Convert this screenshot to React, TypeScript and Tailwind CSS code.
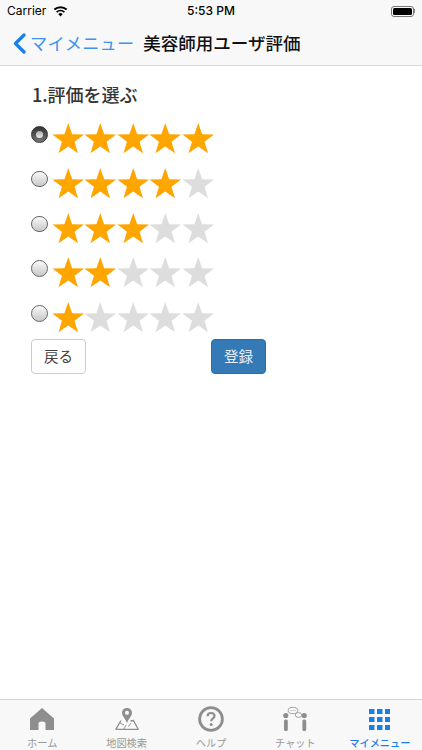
import { Fragment } from 'react';

const jp = "font-['Noto_Sans_CJK_JP','Noto_Sans',sans-serif]";

function Star({ on }: { on: boolean }) {
  return (
    <svg viewBox="0 0 32 31" className="size-[32.5px] shrink-0">
      <path
        d="M16 0.5 L19.8 11.6 L31.6 11.8 L22.2 18.9 L25.6 30.2 L16 23.5 L6.4 30.2 L9.8 18.9 L0.4 11.8 L12.2 11.6 Z"
        fill={on ? '#ffa500' : '#dddddd'}
      />
    </svg>
  );
}

function Radio({ checked }: { checked: boolean }) {
  if (checked) {
    return (
      <div className="flex size-[16.5px] items-center justify-center rounded-full border border-[#333] bg-gradient-to-b from-[#333] to-[#777]">
        <div className="size-[7px] rounded-full bg-gradient-to-b from-[#aaa] to-[#f0f0f0]" />
      </div>
    );
  }
  return <div className="size-[16.5px] rounded-full border border-[#666] bg-gradient-to-b from-[#fafafa] to-[#c8c8c8]" />;
}

function RatingRow({ value, checked }: { value: number; checked?: boolean }) {
  return (
    <div className="flex h-[44.75px] items-start">
      <div className="w-[20.5px] pt-[4px]">
        <Radio checked={!!checked} />
      </div>
      <div className="flex">
        {[1, 2, 3, 4, 5].map((n) => (
          <Star key={n} on={n <= value} />
        ))}
      </div>
    </div>
  );
}

const tabColor = '#8e8e8e';

function HomeIcon() {
  return (
    <svg viewBox="0 0 24 22" className="h-[22px] w-[24px]">
      <path d="M12 0 L24 10.5 L24 22 L15.5 22 L15.5 15.5 Q15.5 13.5 12 13.5 Q8.5 13.5 8.5 15.5 L8.5 22 L0 22 L0 10.5 Z" fill={tabColor} />
    </svg>
  );
}

function MapIcon() {
  return (
    <svg viewBox="0 0 24 22" className="h-[22px] w-[24px]" fill="none" stroke={tabColor}>
      <path d="M6 12.5 L0.8 21.3 L23.2 21.3 L18.5 12.5 L15.5 13" strokeWidth="1.3" strokeLinejoin="round" />
      <path d="M5 15 L9 17 M9 21 L11 17 M13.5 18.5 L16 15" strokeWidth="0.9" />
      <path
        d="M12 0 C8.8 0 7 2.3 7 4.8 C7 8 10.5 11 12 15 C13.5 11 17 8 17 4.8 C17 2.3 15.2 0 12 0 Z"
        fill={tabColor}
        stroke="none"
      />
      <circle cx="12" cy="4.8" r="2.1" fill="#f8f8f8" stroke="none" />
    </svg>
  );
}

function HelpIcon() {
  return (
    <svg viewBox="0 0 26 26" className="size-[26px]" fill="none" stroke={tabColor}>
      <circle cx="13" cy="13" r="11.4" strokeWidth="2.8" />
      <path d="M9.6 10.2 C9.6 8.2 11 7 13 7 C15.2 7 16.5 8.4 16.5 10 C16.5 12.3 13.2 12.6 13.2 15.2" strokeWidth="2.2" />
      <circle cx="13.2" cy="18.6" r="1.5" fill={tabColor} stroke="none" />
    </svg>
  );
}

function ChatIcon() {
  return (
    <svg viewBox="0 0 24 24" className="size-[24px]">
      <circle cx="2.8" cy="8.5" r="2.6" fill={tabColor} />
      <circle cx="21.2" cy="8.5" r="2.6" fill={tabColor} />
      <rect x="1" y="12.5" width="3.8" height="11.5" rx="1.5" fill={tabColor} />
      <rect x="19.4" y="12.5" width="3.8" height="11.5" rx="1.5" fill={tabColor} />
      <ellipse cx="10" cy="3.5" rx="4.8" ry="3.2" fill="#f8f8f8" stroke={tabColor} strokeWidth="0.8" />
      <ellipse cx="15.5" cy="8" rx="3.2" ry="2.4" fill="#f8f8f8" stroke={tabColor} strokeWidth="0.8" />
      <circle cx="8" cy="3.5" r="0.5" fill={tabColor} />
      <circle cx="10" cy="3.5" r="0.5" fill={tabColor} />
      <circle cx="12" cy="3.5" r="0.5" fill={tabColor} />
    </svg>
  );
}

function MenuIcon() {
  return (
    <svg viewBox="0 0 21 21" className="size-[21px]" fill="#1a7ee6">
      {[0, 8, 16].map((y) => (
        <Fragment key={y}>
          {[0, 8, 16].map((x) => (
            <rect key={x} x={x} y={y} width="5.5" height="5" />
          ))}
        </Fragment>
      ))}
    </svg>
  );
}

const tabs = [
  { label: 'ホーム', icon: <HomeIcon /> },
  { label: '地図検索', icon: <MapIcon /> },
  { label: 'ヘルプ', icon: <HelpIcon /> },
  { label: 'チャット', icon: <ChatIcon /> },
  { label: 'マイメニュー', icon: <MenuIcon />, active: true },
];

export default function App() {
  return (
    <div className={`flex h-[750px] w-[422px] flex-col overflow-hidden bg-white ${jp}`}>
      {/* Status + nav bar */}
      <div className="h-[66px] shrink-0 border-b border-[#d8d8d8] bg-[#f8f8f8]">
        <div className="flex h-[22px] items-center justify-between pl-[7px] pr-[7px] font-['Inter',sans-serif] text-[12px] text-black">
          <div className="flex w-[140px] items-center gap-[7px]">
            <span>Carrier</span>
            <svg viewBox="0 0 16 12" className="h-[11px] w-[15px]" fill="black">
              <path d="M8 11.5 L5.6 8.7 A3.6 3.6 0 0 1 10.4 8.7 Z" />
              <path d="M4.4 7.4 L3.1 5.9 A7.4 7.4 0 0 1 12.9 5.9 L11.6 7.4 A5.5 5.5 0 0 0 4.4 7.4 Z" />
              <path d="M2 4.6 L0.6 3 A11.2 11.2 0 0 1 15.4 3 L14 4.6 A9.2 9.2 0 0 0 2 4.6 Z" />
            </svg>
          </div>
          <span className="font-medium">5:53 PM</span>
          <div className="flex w-[140px] justify-end">
            <div className="flex items-center">
              <div className="h-[11px] w-[23px] rounded-[3px] border border-[#777] p-[1px]">
                <div className="h-full w-full rounded-[1.5px] bg-black" />
              </div>
              <div className="h-[4px] w-[1px] bg-[#888]" />
            </div>
          </div>
        </div>
        <div className="flex h-[43px] items-center pb-[1px] pl-[13px]">
          <svg viewBox="0 0 13 21" className="h-[21px] w-[13px]" fill="none" stroke="#1a7ee6" strokeWidth="3.2" strokeLinecap="round" strokeLinejoin="round">
            <path d="M11 2 L2.5 10.5 L11 19" />
          </svg>
          <span className="ml-[4px] text-[17.2px] tracking-[0.2px] text-[#3b93f0]">マイメニュー</span>
          <span className="ml-[9px] text-[17.5px] font-medium text-[#111]">美容師用ユーザ評価</span>
        </div>
      </div>

      {/* Content */}
      <main className="flex-1 px-[31px]">
        <h2 className="mt-[15px] pl-[1px] text-[18px] font-medium leading-[26px] text-[#333]">1.評価を選ぶ</h2>
        <div className="mt-[15px]">
          <RatingRow value={5} checked />
          <RatingRow value={4} />
          <RatingRow value={3} />
          <RatingRow value={2} />
          <RatingRow value={1} />
        </div>
        <div className="-mt-[7px] flex w-[235px] justify-between">
          <button className="h-[35px] w-[55px] rounded-[4px] border border-[#ccc] bg-white text-[14.5px] text-[#444]">戻る</button>
          <button className="h-[35px] w-[55px] rounded-[4px] border border-[#2e6da4] bg-[#337ab7] text-[14.5px] text-[#e8eef5]">登録</button>
        </div>
      </main>

      {/* Tab bar */}
      <nav className="flex h-[51px] shrink-0 border-t border-[#d8d8d8] bg-[#f8f8f8]">
        {tabs.map((t) => (
          <div key={t.label} className="flex flex-1 flex-col items-center">
            <div className="flex h-[36px] items-center pt-[2px]">{t.icon}</div>
            <span className={`mt-[1px] text-[10.2px] leading-[12px] ${t.active ? 'font-medium text-[#1a7ee6]' : 'text-[#999]'}`}>
              {t.label}
            </span>
          </div>
        ))}
      </nav>
    </div>
  );
}
